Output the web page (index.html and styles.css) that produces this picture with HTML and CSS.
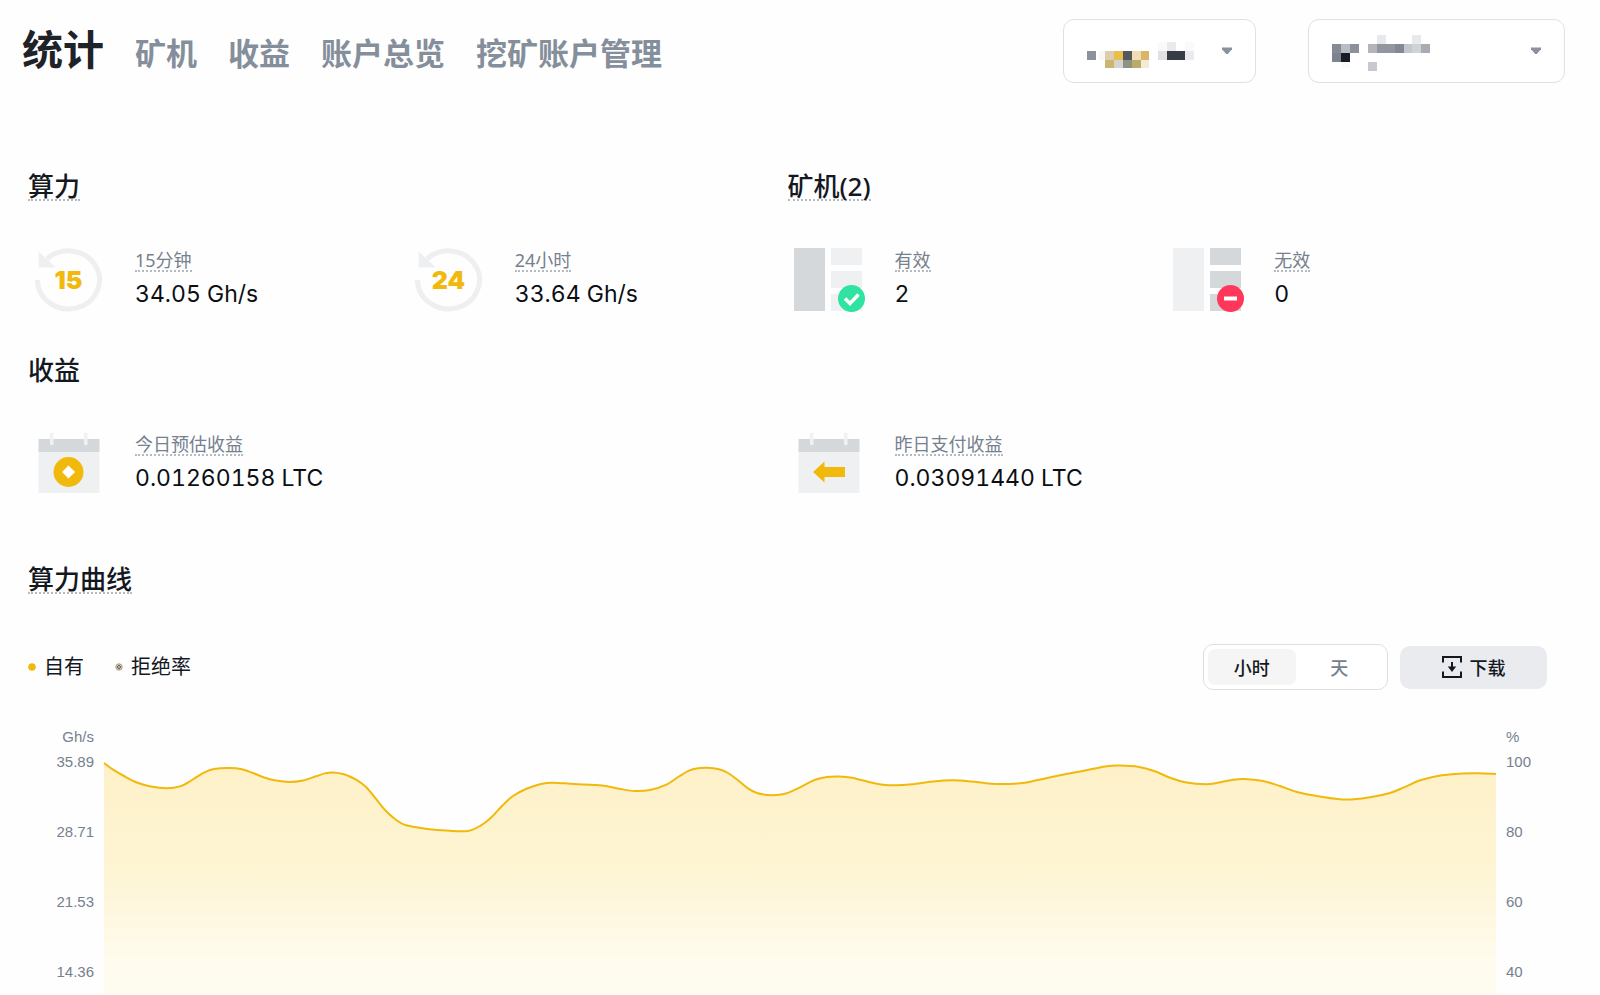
FILE: index.html
```html
<!DOCTYPE html>
<html lang="zh-CN">
<head>
<meta charset="utf-8">
<title>统计</title>
<link rel="stylesheet" href="styles.css">
</head>
<body>
<header class="header">
  <nav class="nav">
    <a class="nav-link nav-current" href="#" aria-current="page">统计</a>
    <a class="nav-link" href="#">矿机</a>
    <a class="nav-link" href="#">收益</a>
    <a class="nav-link" href="#">账户总览</a>
    <a class="nav-link" href="#">挖矿账户管理</a>
  </nav>
  <div class="pickers">
    <div class="picker picker-coin">
      <select class="picker-select" aria-label="币种"><option></option></select>
      <svg class="picker-mask" width="130" height="40" viewBox="0 0 130 40" shape-rendering="crispEdges" aria-hidden="true">
        <rect x="0" y="19" width="9" height="9" fill="#8b929d"/>
        <rect x="12" y="19" width="6" height="9" fill="#faf7f2"/>
        <rect x="18" y="19" width="9" height="9" fill="#dccdb0"/>
        <rect x="27" y="19" width="9" height="9" fill="#e9bf4b"/>
        <rect x="36" y="19" width="9" height="9" fill="#54585c"/>
        <rect x="45" y="19" width="9" height="9" fill="#f0dcb5"/>
        <rect x="54" y="19" width="8" height="9" fill="#d9b469"/>
        <rect x="18" y="28" width="9" height="8" fill="#cbb570"/>
        <rect x="27" y="28" width="9" height="8" fill="#d5d3d0"/>
        <rect x="36" y="28" width="9" height="8" fill="#8f9184"/>
        <rect x="45" y="28" width="9" height="8" fill="#b9ab6c"/>
        <rect x="54" y="28" width="8" height="8" fill="#f4ead6"/>
        <rect x="71" y="10" width="9" height="9" fill="#fafafa"/>
        <rect x="80" y="10" width="9" height="9" fill="#e9eaed"/>
        <rect x="98" y="10" width="9" height="9" fill="#fafafa"/>
        <rect x="71" y="19" width="9" height="9" fill="#dfe1e3"/>
        <rect x="80" y="19" width="18" height="9" fill="#383c45"/>
        <rect x="98" y="19" width="9" height="9" fill="#ebebef"/>
      </svg>
      <svg class="picker-arrow" width="12" height="8" viewBox="0 0 12 8" aria-hidden="true"><path d="M1 .5h10v1.800L6.800 7H5.200L1 2.300z" fill="#8a929e"/></svg>
    </div>
    <div class="picker picker-account">
      <select class="picker-select" aria-label="挖矿账户"><option></option></select>
      <svg class="picker-mask" width="130" height="40" viewBox="0 0 130 40" shape-rendering="crispEdges" aria-hidden="true">
        <rect x="0" y="12" width="9" height="9" fill="#848b96"/>
        <rect x="9" y="12" width="9" height="9" fill="#b9bdc3"/>
        <rect x="18" y="12" width="9" height="9" fill="#8b909b"/>
        <rect x="0" y="21" width="9" height="9" fill="#7c838e"/>
        <rect x="9" y="21" width="9" height="9" fill="#181c25"/>
        <rect x="9" y="30" width="9" height="6" fill="#fafafa"/>
        <rect x="45" y="3" width="9" height="9" fill="#e8e9ec"/>
        <rect x="80" y="3" width="9" height="9" fill="#e8e9ec"/>
        <rect x="36" y="12" width="9" height="9" fill="#b2b6bc"/>
        <rect x="45" y="12" width="18" height="9" fill="#92979f"/>
        <rect x="63" y="12" width="9" height="9" fill="#828995"/>
        <rect x="72" y="12" width="8" height="9" fill="#c4c7ca"/>
        <rect x="80" y="12" width="9" height="9" fill="#d0d3d5"/>
        <rect x="89" y="12" width="9" height="9" fill="#a8abb2"/>
        <rect x="36" y="30" width="9" height="9" fill="#c6cacf"/>
      </svg>
      <svg class="picker-arrow" width="12" height="8" viewBox="0 0 12 8" aria-hidden="true"><path d="M1 .5h10v1.800L6.800 7H5.200L1 2.300z" fill="#8a929e"/></svg>
    </div>
  </div>
</header>

<main class="content">
  <div class="summary">
    <section>
      <h2 class="heading dotted">算力</h2>
      <div class="stats">
        <div class="stat">
          <svg class="stat-icon" viewBox="0 0 80 80" aria-hidden="true">
            <path d="M9.500 40A31 29 0 1 0 19 19" fill="none" stroke="#eeeff1" stroke-width="5"/>
            <path d="M10.700 11.500v16h17z" fill="#eeeff1"/>
            <text class="icon-number" x="40.500" y="49" text-anchor="middle">15</text>
          </svg>
          <div class="stat-text"><span class="label dotted">15分钟</span><span class="value">34.05 Gh/s</span></div>
        </div>
        <div class="stat">
          <svg class="stat-icon" viewBox="0 0 80 80" aria-hidden="true">
            <path d="M9.500 40A31 29 0 1 0 19 19" fill="none" stroke="#eeeff1" stroke-width="5"/>
            <path d="M10.700 11.500v16h17z" fill="#eeeff1"/>
            <text class="icon-number" x="40.500" y="49" text-anchor="middle">24</text>
          </svg>
          <div class="stat-text"><span class="label dotted">24小时</span><span class="value">33.64 Gh/s</span></div>
        </div>
      </div>
    </section>
    <section>
      <h2 class="heading dotted">矿机(2)</h2>
      <div class="stats">
        <div class="stat">
          <svg class="stat-icon" viewBox="0 0 80 80" aria-hidden="true">
            <path d="M6 8h31v63H6z" fill="#d5d8db"/>
            <path d="M43 8h31v17H43zM43 31h31v17H43zM43 54h31v17H43z" fill="#eff0f2"/>
            <circle cx="63.500" cy="58.500" r="13.500" fill="#2fe3a0"/>
            <path d="M57 58.500l5 5 8.500-9" fill="none" stroke="#fff" stroke-width="3.500"/>
          </svg>
          <div class="stat-text"><span class="label dotted">有效</span><span class="value">2</span></div>
        </div>
        <div class="stat">
          <svg class="stat-icon" viewBox="0 0 80 80" aria-hidden="true">
            <path d="M6 8h31v63H6z" fill="#eff0f2"/>
            <path d="M43 8h31v17H43zM43 31h31v17H43zM43 54h31v17H43z" fill="#d5d8db"/>
            <circle cx="63.500" cy="58.500" r="13.500" fill="#ff375b"/>
            <path d="M57 58.500h13" fill="none" stroke="#fff" stroke-width="4"/>
          </svg>
          <div class="stat-text"><span class="label dotted">无效</span><span class="value">0</span></div>
        </div>
      </div>
    </section>
  </div>

  <section class="revenue">
    <h2 class="heading">收益</h2>
    <div class="stats">
      <div class="stat">
        <svg class="stat-icon" viewBox="0 0 80 80" aria-hidden="true">
          <path d="M10.500 28h61v41h-61z" fill="#eff0f2"/>
          <path d="M10.500 15h61v13h-61z" fill="#d5d8db"/>
          <path d="M22 9h3.500v12H22zM56 9h3.500v12H56z" fill="#f0f1f3"/>
          <circle cx="40.500" cy="48" r="15" fill="#f0b90b"/>
          <path d="M40.500 41.500l6.500 6.500-6.500 6.500L34 48z" fill="#fff"/>
        </svg>
        <div class="stat-text"><span class="label dotted">今日预估收益</span><span class="value">0.01260158 LTC</span></div>
      </div>
      <div class="stat">
        <svg class="stat-icon" viewBox="0 0 80 80" aria-hidden="true">
          <path d="M10.500 28h61v41h-61z" fill="#eff0f2"/>
          <path d="M10.500 15h61v13h-61z" fill="#d5d8db"/>
          <path d="M22 9h3.500v12H22zM56 9h3.500v12H56z" fill="#f0f1f3"/>
          <path d="M25 48l11.500-10.500V43H57v10H36.500v5.500z" fill="#f0b90b"/>
        </svg>
        <div class="stat-text"><span class="label dotted">昨日支付收益</span><span class="value">0.03091440 LTC</span></div>
      </div>
    </div>
  </section>

  <section class="curve">
    <h2 class="heading dotted">算力曲线</h2>
    <div class="toolbar">
      <ul class="legend">
        <li class="legend-item"><svg width="8" height="8" viewBox="0 0 8 8" aria-hidden="true"><circle cx="4" cy="4" r="3.800" fill="#f0b90b"/></svg>自有</li>
        <li class="legend-item"><svg width="8" height="8" viewBox="0 0 8 8" aria-hidden="true"><circle cx="4" cy="4" r="3.200" fill="#e0d4ae" stroke="#a89c78"/><path d="M4 2l2 2-2 2-2-2z" fill="#a9adb8" stroke="#4a5060" stroke-width=".8"/></svg>拒绝率</li>
      </ul>
      <div class="actions">
        <div class="segmented">
          <button class="segment segment-active" type="button" aria-pressed="true">小时</button>
          <button class="segment" type="button" aria-pressed="false">天</button>
        </div>
        <button class="download" type="button">
          <svg width="20" height="22" viewBox="0 0 20 22" aria-hidden="true"><path d="M1 6.500V1h18v5.500M1 15.500V21h18v-5.500" fill="none" stroke="#14181f" stroke-width="2"/><path d="M10 6v6" stroke="#14181f" stroke-width="2"/><path d="M5.800 10.500h8.400L10 16z" fill="#14181f"/></svg>
          下载
        </button>
      </div>
    </div>
    <div class="chart">
      <div class="axis axis-left"><span class="unit">Gh/s</span><span>35.89</span><span>28.71</span><span>21.53</span><span>14.36</span></div>
      <svg class="plot" viewBox="0 0 1392 231" preserveAspectRatio="none" role="img" aria-label="算力曲线">
        <defs>
          <linearGradient id="area-fill" x1="0" y1="0" x2="0" y2="231" gradientUnits="userSpaceOnUse">
            <stop offset="0" stop-color="#fef1c9"/>
            <stop offset=".43" stop-color="#fef4d2"/>
            <stop offset=".65" stop-color="#fef7e0"/>
            <stop offset=".88" stop-color="#fffcef"/>
            <stop offset="1" stop-color="#fdfaee"/>
          </linearGradient>
        </defs>
        <path id="area" fill="url(#area-fill)"/>
        <path id="line" class="plot-line"/>
      </svg>
      <div class="axis axis-right"><span class="unit">%</span><span>100</span><span>80</span><span>60</span><span>40</span></div>
    </div>
  </section>
</main>
<script src="chart.js"></script>
</body>
</html>
```
FILE: styles.css
```css
* {
  box-sizing: border-box;
}

body {
  margin: 0;
  background: #fefefe;
  color: #14181f;
  font-family: "Noto Sans", "Noto Sans CJK SC", sans-serif;
}

button {
  border: 0;
  padding: 0;
  font: inherit;
  color: inherit;
}

.header {
  display: flex;
  align-items: center;
  justify-content: space-between;
  padding: 19px 35px 0 22px;
}

.nav {
  display: flex;
  align-items: baseline;
  gap: 31px;
  padding-bottom: 4px;
}

.nav-link {
  color: #858e9b;
  font-family: "Noto Sans CJK SC", sans-serif;
  font-size: 31px;
  font-weight: 700;
  line-height: 48px;
  text-decoration: none;
  white-space: nowrap;
}

.nav-current {
  color: #1e2329;
  font-size: 41px;
}

.pickers {
  display: flex;
  gap: 52px;
}

.picker {
  position: relative;
  height: 64px;
}

.picker-coin {
  width: 193px;
}

.picker-account {
  width: 257px;
}

.picker-select {
  appearance: none;
  width: 100%;
  height: 100%;
  border: 1px solid #dfe1e7;
  border-radius: 11px;
  background: #fff;
}

.picker-mask {
  position: absolute;
  top: 13px;
  left: 24px;
  pointer-events: none;
}

.picker-arrow {
  position: absolute;
  top: 28px;
  right: 23px;
  pointer-events: none;
}

.content {
  padding: 90px 53px 0 28px;
}

.summary {
  display: grid;
  grid-template-columns: 1fr 1fr;
}

.heading {
  width: fit-content;
  height: 28px;
  margin: 0;
  color: #14181f;
  font-size: 26px;
  font-weight: 500;
  line-height: 26px;
}

.dotted {
  border-bottom: 2px dotted #b4bac2;
}

.stats {
  display: grid;
  grid-template-columns: 1fr 1fr;
  margin-top: 39px;
}

.stat {
  display: flex;
  align-items: center;
  gap: 27px;
}

.stat-icon {
  width: 80px;
  height: 80px;
}

.icon-number {
  fill: #f0b90b;
  font-family: Inter, sans-serif;
  font-size: 25px;
  font-weight: 900;
}

.stat-text {
  display: flex;
  flex-direction: column;
  align-items: flex-start;
  gap: 7px;
  padding-bottom: 2px;
}

.label {
  color: #76808f;
  font-size: 18px;
  line-height: 20px;
}

.value {
  color: #0b0e14;
  font-family: Inter, sans-serif;
  font-size: 23px;
  font-variant-numeric: tabular-nums;
  line-height: 30px;
}

.revenue {
  margin-top: 37px;
}

.curve {
  margin-top: 62px;
}

.toolbar {
  display: flex;
  align-items: center;
  justify-content: space-between;
  margin-top: 50px;
}

.legend {
  display: flex;
  gap: 31px;
  margin: 0;
  padding: 0;
  list-style: none;
}

.legend-item {
  display: flex;
  align-items: center;
  gap: 8px;
  font-size: 20px;
  line-height: 28px;
}

.actions {
  display: flex;
  align-items: center;
  gap: 12px;
  font-size: 18px;
  font-weight: 500;
}

.segmented {
  display: flex;
  width: 185px;
  height: 46px;
  padding: 4px;
  border: 1px solid #dcdfe5;
  border-radius: 10px;
  background: #fff;
}

.segment {
  flex: 1;
  border-radius: 7px;
  background: none;
  color: #76808f;
}

.segment-active {
  background: #f5f5f5;
  color: #14181f;
}

.download {
  display: flex;
  align-items: center;
  justify-content: center;
  gap: 8px;
  width: 147px;
  height: 43px;
  border-radius: 10px;
  background: #eaebef;
}

.chart {
  display: flex;
  gap: 10px;
  height: 267px;
  margin-top: 37px;
}

.axis {
  display: flex;
  flex-direction: column;
  gap: 50px;
  color: #76808f;
  font-family: "Liberation Sans", sans-serif;
  font-size: 15px;
  line-height: 20px;
}

.axis-left {
  width: 66px;
  text-align: right;
}

.axis-right {
  width: 41px;
}

.unit {
  margin-bottom: -45px;
}

.plot {
  flex: 1;
  min-width: 0;
  height: 231px;
  margin-top: 36px;
  overflow: visible;
}

.plot-line {
  fill: none;
  stroke: #f0b90b;
  stroke-width: 2;
}
```
FILE: chart.js
```js
const points = [
  [0, 0], [9, 6.7], [20, 13], [33, 19.5], [47, 23.6], [63, 25.3], [76, 23.4], [88, 17], [100, 9.6], [110, 6],
  [125, 5], [138, 6.2], [149, 10], [161, 14.7], [172, 17.6], [185, 19], [199, 17.5], [212, 13.3], [221, 10.4],
  [229, 9.4], [240, 11.3], [252, 16.7], [262, 24], [271, 34.7], [281, 47], [291, 56], [302, 62.3], [326, 66.3],
  [343, 67.6], [364, 68], [377, 62.3], [388, 53.7], [398, 43], [409, 33], [423, 25.5], [437, 20.9], [449, 19.7],
  [470, 21], [498, 22.5], [515, 25.7], [531, 28], [546, 27], [563, 21.3], [575, 13.5], [585, 7.7], [594, 5.3],
  [603, 4.7], [615, 6.3], [624, 10], [633, 16.5], [643, 24.7], [653, 30], [668, 32.2], [682, 30.5], [696, 24.3],
  [711, 16.8], [723, 14], [735, 13.5], [748, 14.7], [765, 19], [777, 21.4], [792, 22.3], [808, 21.3], [829, 18.4],
  [849, 17.2], [867, 18.4], [882, 20.2], [898, 21.1], [921, 19.7], [943, 15], [961, 11.2], [980, 7.7], [1001, 3.4],
  [1016, 2.6], [1035, 4], [1050, 8], [1066, 14.7], [1081, 19.3], [1102, 21.3], [1115, 19.5], [1128, 16.9],
  [1140, 16], [1159, 18], [1176, 23], [1193, 29], [1217, 33.7], [1243, 36.6], [1266, 34.3], [1286, 30],
  [1300, 24.3], [1317, 17], [1338, 12.3], [1358, 10.6], [1374, 10.3], [1392, 11]
];

// Catmull-Rom spline through the samples, written as cubic Bézier segments
let line = `M${points[0]}`;
for (let i = 0; i < points.length - 1; i++) {
  const a = points[Math.max(i - 1, 0)];
  const b = points[i];
  const c = points[i + 1];
  const d = points[Math.min(i + 2, points.length - 1)];
  line += `C${b[0] + (c[0] - a[0]) / 6} ${b[1] + (c[1] - a[1]) / 6} ${c[0] - (d[0] - b[0]) / 6} ${c[1] - (d[1] - b[1]) / 6} ${c[0]} ${c[1]}`;
}

document.getElementById("line").setAttribute("d", line);
document.getElementById("area").setAttribute("d", `${line}V231H0Z`);
```
